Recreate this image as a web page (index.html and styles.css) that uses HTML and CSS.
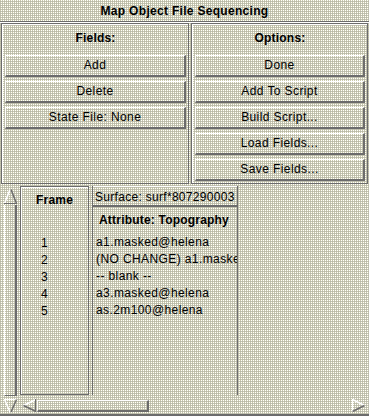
FILE: index.html
```html
<!DOCTYPE html>
<html lang="en">
<head>
  <meta charset="UTF-8">
  <title>Map Object File Sequencing</title>
  <link rel="stylesheet" href="styles.css">
</head>
<body>
  <div class="title">Map Object File Sequencing</div>

  <div class="panels">
    <div class="panel panel-fields">
      <div class="panel-head">Fields:</div>
      <div class="btn">Add</div>
      <div class="btn">Delete</div>
      <div class="btn">State File: None</div>
    </div>
    <div class="panel panel-options">
      <div class="panel-head">Options:</div>
      <div class="btn">Done</div>
      <div class="btn">Add To Script</div>
      <div class="btn">Build Script...</div>
      <div class="btn">Load Fields...</div>
      <div class="btn">Save Fields...</div>
    </div>
  </div>

  <div class="lower">
    <div class="vscroll">
      <svg class="arrow arrow-up" width="15" height="17" viewBox="0 0 15 17">
        <line x1="1.5" y1="15.5" x2="7" y2="1.5" stroke="#fff" stroke-width="1.5"/>
        <line x1="8" y1="1.5" x2="13.5" y2="15.5" stroke="#6c6c6c" stroke-width="1.5"/>
        <line x1="1" y1="15.5" x2="14" y2="15.5" stroke="#6c6c6c" stroke-width="1"/>
      </svg>
      <div class="thumb-v"></div>
      <svg class="arrow arrow-down" width="15" height="15" viewBox="0 0 15 15">
        <line x1="1" y1="1.5" x2="14" y2="1.5" stroke="#fff" stroke-width="1"/>
        <line x1="1.5" y1="1.5" x2="7" y2="14" stroke="#fff" stroke-width="1.5"/>
        <line x1="13.5" y1="1.5" x2="8" y2="14" stroke="#6c6c6c" stroke-width="1.5"/>
      </svg>
    </div>

    <div class="view">
      <div class="table">
        <div class="frame-col">
          <div class="frame-head">Frame</div>
          <div class="frame-gap"></div>
          <div class="frame-num">1</div>
          <div class="frame-num">2</div>
          <div class="frame-num">3</div>
          <div class="frame-num">4</div>
          <div class="frame-num">5</div>
        </div>
        <div class="surf-col">
          <div class="surf-head">Surface: surf*807290003</div>
          <div class="surf-attr">Attribute: Topography</div>
          <div class="surf-row">a1.masked@helena</div>
          <div class="surf-row">(NO CHANGE) a1.maske</div>
          <div class="surf-row">-- blank --</div>
          <div class="surf-row">a3.masked@helena</div>
          <div class="surf-row">as.2m100@helena</div>
        </div>
      </div>

      <div class="hscroll">
        <svg class="arrow arrow-left" width="15" height="15" viewBox="0 0 15 15">
          <line x1="1.5" y1="7.5" x2="14" y2="1.5" stroke="#fff" stroke-width="1.5"/>
          <line x1="1.5" y1="7.5" x2="14" y2="13.5" stroke="#6c6c6c" stroke-width="1.5"/>
          <line x1="13.5" y1="1" x2="13.5" y2="14" stroke="#6c6c6c" stroke-width="1"/>
        </svg>
        <div class="thumb-h"></div>
        <div class="hscroll-fill"></div>
        <svg class="arrow arrow-right" width="15" height="15" viewBox="0 0 15 15">
          <line x1="1.5" y1="1" x2="1.5" y2="14" stroke="#fff" stroke-width="1"/>
          <line x1="1.5" y1="1.5" x2="13.5" y2="7.5" stroke="#fff" stroke-width="1.5"/>
          <line x1="1.5" y1="13.5" x2="13.5" y2="7.5" stroke="#6c6c6c" stroke-width="1.5"/>
        </svg>
      </div>
    </div>
  </div>
</body>
</html>
```

FILE: styles.css
```css
body {
  margin: 0;
  width: 369px;
  height: 416px;
  overflow: hidden;
  font-family: "Liberation Sans", Arial, sans-serif;
  font-size: 12px;
  letter-spacing: 0.4px;
  color: #000;
  background-color: #c8c8ac;
  background-image: conic-gradient(#fff 0 25%, #c9c9a9 0 50%, #b4b4b0 0 75%, #c9c9a9 0);
  background-size: 2px 2px;
}

.title {
  height: 21px;
  line-height: 22px;
  text-align: center;
  font-weight: bold;
  letter-spacing: 0.3px;
  border-bottom: 1px solid #6c6c6c;
  box-shadow: 0 1px 0 #fff;
}

.panels {
  display: flex;
  gap: 2px;
  padding: 1px 1px 0 1px;
}

.panel {
  display: flex;
  flex-direction: column;
  gap: 4px;
  padding: 0 2px 2px 3px;
  border: 1px solid #6c6c6c;
  box-shadow: inset 1px 1px 0 #fff;
}

.panel-fields {
  width: 188px;
  box-sizing: border-box;
}

.panel-options {
  flex: 1;
}

.panel-head {
  height: 27px;
  line-height: 29px;
  text-align: center;
  font-weight: bold;
  letter-spacing: 0.2px;
}

.btn {
  height: 22px;
  box-sizing: border-box;
  line-height: 19px;
  text-align: center;
  border-top: 1px solid #fff;
  border-left: 1px solid #fff;
  border-right: 2px solid #6c6c6c;
  border-bottom: 2px solid #6c6c6c;
}

.lower {
  display: flex;
  gap: 2px;
  height: 229px;
  margin-top: 1px;
  padding: 0 3px;
  border-bottom: 2px solid #6c6c6c;
}

.vscroll {
  width: 15px;
  display: flex;
  flex-direction: column;
}

.arrow {
  display: block;
  flex: none;
}

.arrow-up {
  margin-top: 3px;
}

.thumb-v {
  flex: 1;
  margin: 0 1px 2px 1px;
  border-left: 1px solid #fff;
  border-right: 2px solid #6c6c6c;
  border-bottom: 1px solid #6c6c6c;
}

.arrow-down {
  margin-bottom: 1px;
}

.view {
  flex: 1;
  display: flex;
  flex-direction: column;
}

.table {
  flex: 1;
  display: flex;
  gap: 3px;
  padding-top: 1px;
}

.frame-col {
  width: 69px;
  box-sizing: border-box;
  margin-bottom: 2px;
  border: 1px solid #6c6c6c;
  box-shadow: inset 1px 1px 0 #fff;
}

.frame-head {
  height: 21px;
  line-height: 26px;
  text-align: center;
  font-weight: bold;
  letter-spacing: 0.2px;
}

.frame-gap {
  height: 26px;
}

.frame-num,
.surf-row {
  height: 17px;
  line-height: 18px;
  white-space: nowrap;
}

.frame-num {
  padding-left: 20px;
}

.surf-col {
  width: 146px;
  box-sizing: border-box;
  margin-bottom: 2px;
  overflow: hidden;
  border-left: 1px solid #6c6c6c;
  border-right: 1px solid #6c6c6c;
}

.surf-head {
  height: 21px;
  box-sizing: border-box;
  padding-left: 2px;
  line-height: 21px;
  letter-spacing: 0.3px;
  white-space: nowrap;
  overflow: hidden;
  border-top: 1px solid #fff;
  border-bottom: 2px solid #6c6c6c;
}

.surf-attr {
  height: 26px;
  line-height: 27px;
  padding-left: 6px;
  font-weight: bold;
  letter-spacing: 0.2px;
  white-space: nowrap;
}

.surf-row {
  padding-left: 3px;
}

.hscroll {
  height: 17px;
  display: flex;
  align-items: center;
}

.arrow-left {
  margin-left: 2px;
}

.thumb-h {
  width: 112px;
  height: 12px;
  box-sizing: border-box;
  border-top: 1px solid #fff;
  border-left: 1px solid #fff;
  border-right: 2px solid #6c6c6c;
  border-bottom: 2px solid #6c6c6c;
}

.hscroll-fill {
  flex: 1;
}
```
